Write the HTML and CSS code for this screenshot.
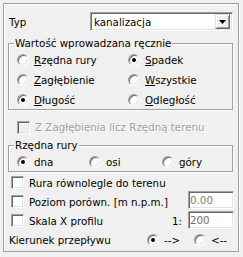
FILE: index.html
```html
<!DOCTYPE html>
<html lang="pl">
<head>
    <meta charset="UTF-8">
    <title>Profil</title>
    <link rel="stylesheet" href="styles.css">
</head>
<body>
    <div class="panel">
        <div class="typ-row">
            <span class="typ-label">Typ</span>
            <div class="combo">
                <span class="combo-text">kanalizacja</span>
                <span class="combo-btn">
                    <svg width="7" height="4" viewBox="0 0 7 4"><path d="M0 0h7L3.5 4z" fill="#000"/></svg>
                </span>
            </div>
        </div>

        <fieldset class="group group-value">
            <legend>Wartość wprowadzana ręcznie</legend>
            <div class="radio-grid">
                <label class="opt"><span class="radio"></span><span><u>R</u>zędna rury</span></label>
                <label class="opt"><span class="radio checked"></span><span><u>S</u>padek</span></label>
                <label class="opt"><span class="radio"></span><span><u>Z</u>agłębienie</span></label>
                <label class="opt"><span class="radio"></span><span><u>W</u>szystkie</span></label>
                <label class="opt"><span class="radio checked"></span><span><u>D</u>ługość</span></label>
                <label class="opt"><span class="radio"></span><span><u>O</u>dległość</span></label>
            </div>
        </fieldset>

        <label class="opt opt-disabled"><span class="box box-disabled"></span><span>Z Zagłębienia licz Rzędną terenu</span></label>

        <fieldset class="group group-level">
            <legend>Rzędna rury</legend>
            <div class="level-row">
                <label class="opt opt-dna"><span class="radio checked"></span><span>dna</span></label>
                <label class="opt opt-osi"><span class="radio"></span><span>osi</span></label>
                <label class="opt opt-gory"><span class="radio"></span><span>góry</span></label>
            </div>
        </fieldset>

        <div class="check-list">
            <div class="check-row">
                <label class="opt"><span class="box"></span><span>Rura równolegle do terenu</span></label>
            </div>
            <div class="check-row">
                <label class="opt"><span class="box"></span><span>Poziom porówn. [m n.p.m.]</span></label>
                <span class="field field-level">0.00</span>
            </div>
            <div class="check-row">
                <label class="opt"><span class="box"></span><span>Skala X profilu</span></label>
                <span class="scale-prefix">1:</span>
                <span class="field field-scale">200</span>
            </div>
            <div class="check-row dir-row">
                <span class="dir-label">Kierunek przepływu</span>
                <label class="opt opt-fwd"><span class="radio checked"></span><span>--&gt;</span></label>
                <label class="opt opt-back"><span class="radio"></span><span>&lt;--</span></label>
            </div>
        </div>
    </div>
</body>
</html>
```

FILE: styles.css
```css
* {
    box-sizing: border-box;
}

body {
    margin: 0;
    background: #f0f0f0;
    font-family: "DejaVu Sans", sans-serif;
    font-size: 10.3px;
    color: #000;
}

u {
    text-decoration: underline;
    text-underline-offset: 1px;
}

.panel {
    width: 236px;
    height: 249px;
    margin: 3px 0 0 3px;
    padding: 8px 0 0 0;
    border: 1px solid #a0a0a0;
    box-shadow: inset 1px 1px #fff, 1px 1px #fff;
}

/* Typ */
.typ-row {
    display: flex;
    align-items: center;
    height: 19px;
}

.typ-label {
    width: 86px;
    padding-left: 5px;
}

.combo {
    display: flex;
    align-items: center;
    width: 143px;
    height: 19px;
    background: #fff;
    border: 1px solid;
    border-color: #a0a0a0 #fff #fff #a0a0a0;
    box-shadow: inset 1px 1px #696969, inset -1px -1px #e3e3e3;
    padding: 2px;
}

.combo-text {
    flex: 1;
    padding-left: 1px;
}

.combo-btn {
    display: flex;
    align-items: center;
    justify-content: center;
    width: 15px;
    height: 15px;
    background: #f0f0f0;
    border: 1px solid;
    border-color: #e3e3e3 #696969 #696969 #e3e3e3;
    box-shadow: inset 1px 1px #fff, inset -1px -1px #a0a0a0;
}

/* group boxes */
.group {
    margin: 6px 0 0 4px;
    width: 225px;
    padding: 0 0 0 6px;
    border: 1px solid #a0a0a0;
    box-shadow: inset 1px 1px #fff, 1px 1px #fff;
}

.group legend {
    padding: 0 1px;
    margin-left: -1px;
    line-height: 13px;
    background: #f0f0f0;
}

.radio-grid {
    display: grid;
    grid-template-columns: 111px 1fr;
    grid-auto-rows: 19px;
    row-gap: 1px;
    padding-left: 2px;
}

.opt {
    display: flex;
    align-items: center;
    gap: 5px;
    white-space: nowrap;
}

.radio {
    position: relative;
    flex: none;
    width: 12px;
    height: 12px;
    border-radius: 50%;
    background: #fff;
    border: 1px solid;
    border-color: #a0a0a0 #fff #fff #a0a0a0;
    box-shadow: inset 1px 1px #696969, inset -1px -1px #e3e3e3;
}

.radio.checked::after {
    content: "";
    position: absolute;
    left: 3px;
    top: 3px;
    width: 4px;
    height: 4px;
    border-radius: 50%;
    background: #000;
}

.box {
    flex: none;
    width: 13px;
    height: 13px;
    background: #fff;
    border: 1px solid;
    border-color: #a0a0a0 #fff #fff #a0a0a0;
    box-shadow: inset 1px 1px #696969, inset -1px -1px #e3e3e3;
}

.box-disabled {
    background: #f0f0f0;
}

.opt-disabled {
    height: 20px;
    margin: 7px 0 0 13px;
    color: #a0a0a0;
    text-shadow: 1px 1px #fff;
}

.group-level {
    margin-top: 2px;
}

.level-row {
    display: flex;
    height: 19px;
    padding-left: 2px;
}

.opt-dna {
    width: 72px;
}

.opt-osi {
    width: 73px;
}

/* checkboxes */
.check-list {
    padding: 1px 0 0 7px;
}

.check-row {
    display: flex;
    align-items: center;
    height: 19px;
}

.check-row .opt {
    flex: 1;
}

.scale-prefix {
    width: 16px;
}

.field {
    align-self: flex-start;
    margin: -1px 4px 0 0;
    width: 46px;
    height: 18px;
    padding: 2px 1px 0;
    background: #fff;
    border: 1px solid;
    border-color: #a0a0a0 #fff #fff #a0a0a0;
    box-shadow: inset 1px 1px #696969, inset -1px -1px #e3e3e3;
    color: #808080;
}

.field-scale {
    margin-top: 0;
    color: #6d6d6d;
}

.dir-row {
    margin-left: -2px;
}

.dir-label {
    flex: 1;
}

.opt-fwd {
    width: 47px;
}

.opt-back {
    width: 44px;
}

.dir-row .opt {
    flex: none;
}
```
